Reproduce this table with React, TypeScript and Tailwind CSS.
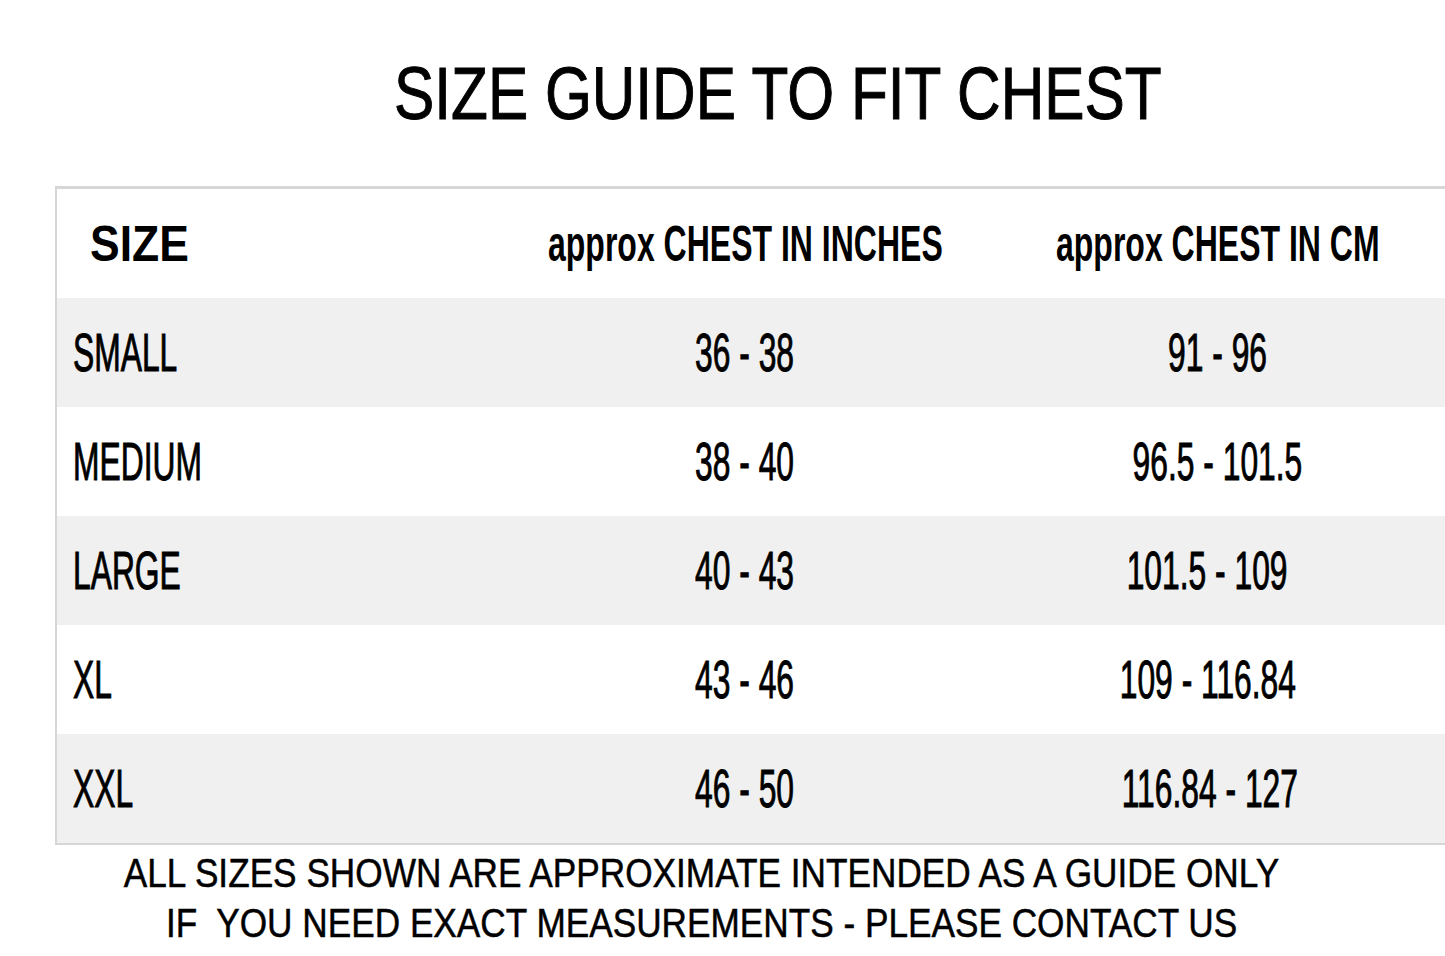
const rows = [
  { size: "SMALL", inches: "36 - 38", cm: "91 - 96", bg: "bg-[#f0f0f0]", cmShift: "" },
  { size: "MEDIUM", inches: "38 - 40", cm: "96.5 - 101.5", bg: "bg-white", cmShift: "" },
  { size: "LARGE", inches: "40 - 43", cm: "101.5 - 109", bg: "bg-[#f0f0f0]", cmShift: "pr-[20px]" },
  { size: "XL", inches: "43 - 46", cm: "109 - 116.84", bg: "bg-white", cmShift: "pr-[20px]" },
  { size: "XXL", inches: "46 - 50", cm: "116.84 - 127", bg: "bg-[#f0f0f0]", cmShift: "pr-[16px]" },
];

export default function App() {
  return (
    <div className="w-[1445px] h-[956px] overflow-hidden bg-white text-black font-['Liberation_Sans',Arial,sans-serif]">
      {/* Title */}
      <div className="pt-[57px] pl-[110px] h-[186px] flex justify-center">
        <h1 className="text-[74px] leading-none font-normal scale-x-[0.815] origin-center whitespace-nowrap [-webkit-text-stroke:1px_black]">
          SIZE GUIDE TO FIT CHEST
        </h1>
      </div>

      {/* Table */}
      <div className="ml-[55px] border-t-[3px] border-l-2 border-b-2 border-[#d6d6d6]">
        <div className="grid grid-cols-[443px_490px_455px] h-[109px] bg-white">
          <div className="flex items-center pl-[33px]">
            <span className="inline-block text-[50px] leading-none font-bold scale-x-[0.89] origin-left whitespace-nowrap">
              SIZE
            </span>
          </div>
          <div className="flex items-center justify-center">
            <span className="inline-block text-[50px] leading-none font-bold scale-x-[0.64] origin-center whitespace-nowrap">
              approx CHEST IN INCHES
            </span>
          </div>
          <div className="flex items-center justify-center">
            <span className="inline-block text-[50px] leading-none font-bold scale-x-[0.64] origin-center whitespace-nowrap">
              approx CHEST IN CM
            </span>
          </div>
        </div>

        {rows.map((r) => (
          <div key={r.size} className={`grid grid-cols-[443px_490px_455px] h-[109px] ${r.bg}`}>
            <div className="flex items-center pl-[16px]">
              <span className="inline-block text-[53px] leading-none scale-x-[0.6] origin-left whitespace-nowrap [-webkit-text-stroke:1px_black]">
                {r.size}
              </span>
            </div>
            <div className="flex items-center justify-center">
              <span className="inline-block text-[53px] leading-none scale-x-[0.6] origin-center whitespace-nowrap [-webkit-text-stroke:1px_black]">
                {r.inches}
              </span>
            </div>
            <div className={`flex items-center justify-center ${r.cmShift}`}>
              <span className="inline-block text-[53px] leading-none scale-x-[0.6] origin-center whitespace-nowrap [-webkit-text-stroke:1px_black]">
                {r.cm}
              </span>
            </div>
          </div>
        ))}
      </div>

      {/* Footnote */}
      <div className="mt-[3px] pr-[42px] flex flex-col items-center">
        <p className="text-[40px] leading-[50px] scale-x-[0.88] origin-center whitespace-pre [-webkit-text-stroke:0.5px_black]">
          ALL SIZES SHOWN ARE APPROXIMATE INTENDED AS A GUIDE ONLY
        </p>
        <p className="text-[40px] leading-[50px] scale-x-[0.88] origin-center whitespace-pre [-webkit-text-stroke:0.5px_black]">
          {"IF  YOU NEED EXACT MEASUREMENTS - PLEASE CONTACT US"}
        </p>
      </div>
    </div>
  );
}
